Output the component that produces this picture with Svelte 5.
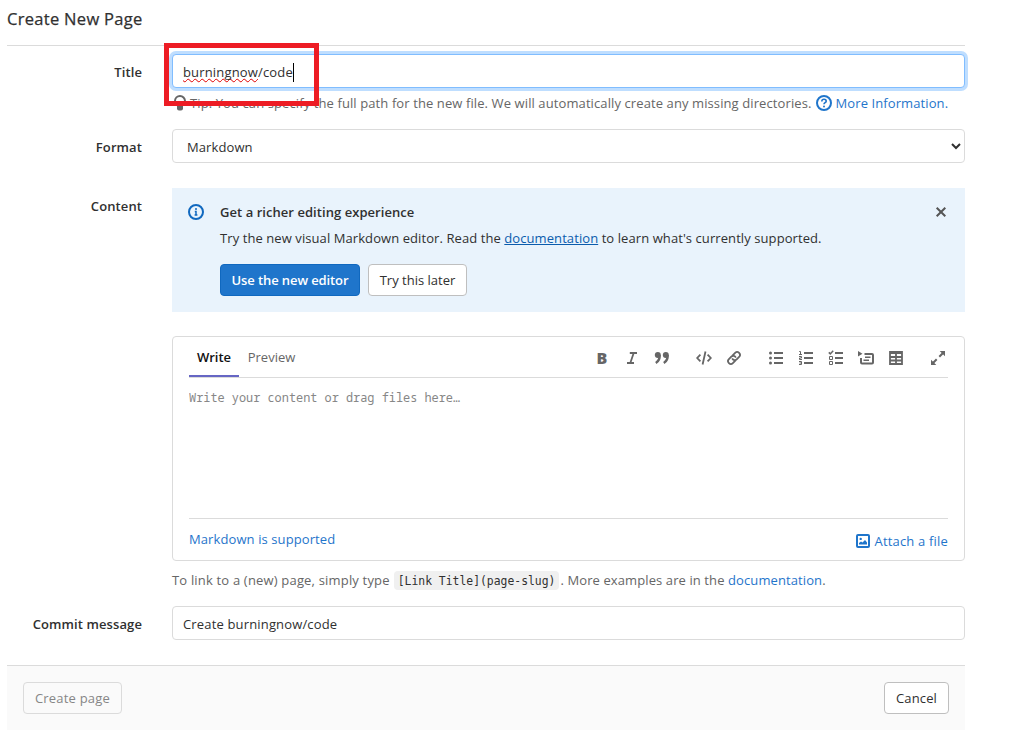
<script lang="ts">
  let title = $state('burningnow/code');
  let format = $state('Markdown');
  let tab = $state<'write' | 'preview'>('write');
  let showAlert = $state(true);

  let parts = $derived(title.split('/'));
  let commitMessage = $derived(`Create ${title}`);

  const toolbar = [
    ['bold', 'italic', 'quote'],
    ['code', 'link'],
    ['list-bulleted', 'list-numbered', 'list-task', 'collapsible', 'table'],
    ['maximize'],
  ];
</script>

{#snippet icon(name: string)}
  <svg class="icon" width="16" height="16" viewBox="0 0 16 16" fill="none" stroke="currentColor" stroke-width="2" aria-hidden="true">
    {#if name === 'bulb'}
      <path d="M5.8 10.6C4.1 9.6 3 8 3 6.1a5 5 0 0 1 10 0c0 1.9-1.1 3.5-2.8 4.5" />
      <path d="M5 10.5h6v3a2 2 0 0 1-2 2H7a2 2 0 0 1-2-2z" fill="currentColor" stroke="none" />
    {:else if name === 'question'}
      <circle cx="8" cy="8" r="7" />
      <path d="M5.8 6.4C5.8 5 6.8 4.2 8 4.2s2.2.8 2.2 2c0 1.5-2.2 1.5-2.2 3" stroke-width="1.6" />
      <circle cx="8" cy="11.4" r="1" fill="currentColor" stroke="none" />
    {:else if name === 'info'}
      <circle cx="8" cy="8" r="7" />
      <path d="M6.8 7.6H8v3.4M6.6 11h2.8" stroke-width="1.5" />
      <circle cx="8" cy="5" r="1" fill="currentColor" stroke="none" />
    {:else if name === 'close'}
      <path d="M3.7 3.7l8.6 8.6M12.3 3.7l-8.6 8.6" />
    {:else if name === 'italic'}
      <path d="M5.8 3H13M3 13h7M9.7 3L6.3 13" stroke-width="1.8" />
    {:else if name === 'quote'}
      <g fill="currentColor" stroke="none">
        <circle cx="3.8" cy="5" r="3" />
        <circle cx="11.8" cy="5" r="3" />
      </g>
      <path d="M5.6 5c.3 3.6-.6 6-3.8 8M13.6 5c.3 3.6-.6 6-3.8 8" stroke-width="2.4" />
    {:else if name === 'code'}
      <path d="M4.4 4.6L1.2 8l3.2 3.4M11.6 4.6L14.8 8l-3.2 3.4M9.5 1.5L6.6 14.5" stroke-width="1.8" />
    {:else if name === 'link'}
      <g transform="rotate(-45 8 8)">
        <path d="M7.8 10.8H3.6a2.8 2.8 0 0 1 0-5.6H7a2.8 2.8 0 0 1 2.6 3.8" stroke-width="1.8" />
        <path d="M8.2 5.2h4.2a2.8 2.8 0 0 1 0 5.6H9A2.8 2.8 0 0 1 6.4 7" stroke-width="1.8" />
      </g>
    {:else if name === 'list-bulleted'}
      <path d="M6 3h9M6 8h9M6 13h9" />
      <g fill="currentColor" stroke="none">
        <circle cx="2.5" cy="3" r="1.5" />
        <circle cx="2.5" cy="8" r="1.5" />
        <circle cx="2.5" cy="13" r="1.5" />
      </g>
    {:else if name === 'list-numbered'}
      <path d="M6 3h9M6 8h9M6 13h9" />
      <path d="M1.2 1.5h1.3v3.3M1 4.5h3" stroke-width="1" />
      <path d="M1 6.5h2.5V8h-2v1.5H4" stroke-width="1" />
      <path d="M1 11.5h2.5v3H1M1.5 13h2" stroke-width="1" />
    {:else if name === 'list-task'}
      <path d="M7 3h8M7 8h8M7 13h8" />
      <path d="M.8 2.4l1.5 1.5L5.2.8" stroke-width="1.5" />
      <path d="M1.5 6.5h3v3h-3zM1.5 11.5h3v3h-3z" stroke-width="1" />
    {:else if name === 'collapsible'}
      <path d="M0 1v5.6l4.5-2.8z" fill="currentColor" stroke="none" />
      <path d="M6.5 4H14a1 1 0 0 1 1 1v7.5a1 1 0 0 1-1 1H4a1 1 0 0 1-1-1V8" />
      <path d="M7 7.3h5.5M5.5 10.2h5.5" stroke-width="1.4" />
    {:else if name === 'table'}
      <path d="M2 2h12v12H2zM2 3h12M2 7h12M2 10.5h12M8 4v10" stroke-width="1.8" />
    {:else if name === 'maximize'}
      <path d="M9.3 6.7L13 3M6.7 9.3L3 13" />
      <path d="M9.7 1H15v5.3zM6.3 15H1V9.7z" fill="currentColor" stroke="none" />
    {:else if name === 'image'}
      <rect x="2" y="2" width="12" height="12" rx="1" />
      <path d="M4 11.5V10l2-1.5 1.5 1L10 7l2 2.5v2z" fill="currentColor" stroke="none" />
      <circle cx="5.7" cy="5.9" r="1.2" fill="currentColor" stroke="none" />
    {/if}
  </svg>
{/snippet}

<main>
  <h1>Create New Page</h1>

  <form>
    <div class="row title-row">
      <span class="label">Title</span>
      <div class="field">
        <div class="control focused" role="textbox" tabindex="0">
          <span class="misspelled">{parts[0]}</span><span>/{parts[1]}</span><span class="caret"></span>
          <div class="highlight"></div>
        </div>
        <p class="hint">
          {@render icon('bulb')}
          <span class="tip">Tip: You can specify the full path for the new file. We will automatically create any missing directories.</span>
          <a href="#help" class="more">{@render icon('question')}<span>More Information.</span></a>
        </p>
      </div>
    </div>

    <div class="row format-row">
      <label class="label" for="format">Format</label>
      <div class="field">
        <select id="format" class="control" bind:value={format}>
          <option>Markdown</option>
          <option>RDoc</option>
          <option>AsciiDoc</option>
          <option>Org</option>
        </select>
      </div>
    </div>

    <div class="row content-row">
      <span class="label">Content</span>
      <div class="field">
        {#if showAlert}
          <div class="alert">
            <span class="info">{@render icon('info')}</span>
            <div class="alert-body">
              <h2>Get a richer editing experience</h2>
              <p>Try the new visual Markdown editor. Read the <a href="#docs">documentation</a> to learn what's currently supported.</p>
              <div class="actions">
                <button type="button" class="btn primary">Use the new editor</button>
                <button type="button" class="btn later">Try this later</button>
              </div>
            </div>
            <button type="button" class="dismiss" aria-label="Dismiss" onclick={() => (showAlert = false)}>{@render icon('close')}</button>
          </div>
        {/if}

        <div class="editor">
          <div class="editor-header">
            <button type="button" class="tab write" class:active={tab === 'write'} onclick={() => (tab = 'write')}>Write</button>
            <button type="button" class="tab preview" class:active={tab === 'preview'} onclick={() => (tab = 'preview')}>Preview</button>
            <div class="toolbar">
              {#each toolbar as group}
                <div class="group">
                  {#each group as name}
                    <button type="button" class="tool" aria-label={name}>
                      {#if name === 'bold'}<b>B</b>{:else}{@render icon(name)}{/if}
                    </button>
                  {/each}
                </div>
              {/each}
            </div>
          </div>
          <textarea placeholder="Write your content or drag files here…"></textarea>
          <div class="editor-footer">
            <a href="#markdown" class="supported">Markdown is supported</a>
            <a href="#attach" class="attach">{@render icon('image')}<span>Attach a file</span></a>
          </div>
        </div>

        <p class="help">
          <span>To link to a (new) page, simply type</span>
          <code>[Link Title](page-slug)</code>
          <span>. More examples are in the <a href="#docs">documentation</a>.</span>
        </p>
      </div>
    </div>

    <div class="row commit-row">
      <label class="label" for="message">Commit message</label>
      <div class="field">
        <input id="message" class="control" type="text" value={commitMessage} />
      </div>
    </div>

    <footer>
      <button type="button" class="btn create" disabled>Create page</button>
      <button type="button" class="btn cancel">Cancel</button>
    </footer>
  </form>
</main>

<style>
  :global(body) {
    background: #fff;
  }

  main,
  button,
  input,
  select {
    font-family: 'Open Sans', 'Noto Sans', sans-serif;
    font-size: 13px;
    letter-spacing: 0.1px;
    color: #303030;
  }

  main {
    box-sizing: border-box;
    width: 965px;
    padding-left: 7px;
    line-height: 20px;
  }

  main :global(*) {
    box-sizing: border-box;
  }

  h1 {
    height: 46px;
    margin: 0;
    padding-top: 7px;
    border-bottom: 1px solid #dbdbdb;
    font-size: 16.5px;
    font-weight: 500;
    line-height: 24px;
    letter-spacing: 0.3px;
    -webkit-text-stroke: 0.25px #303030;
  }

  h2,
  p {
    margin: 0;
  }

  a {
    color: #1f75cb;
    text-decoration: none;
  }

  .icon {
    display: block;
    flex-shrink: 0;
  }

  .row {
    display: flex;
  }

  .title-row {
    padding-top: 8px;
  }

  .format-row {
    margin-top: 16px;
  }

  .content-row {
    margin-top: 25px;
  }

  .commit-row {
    margin-top: 16px;
  }

  .label {
    width: 135px;
    margin-right: 30px;
    padding-top: 8px;
    font-weight: 600;
    text-align: right;
  }

  .field {
    flex: 1;
    min-width: 0;
  }

  .control {
    display: flex;
    align-items: center;
    width: 100%;
    height: 34px;
    padding: 2px 10px 0;
    border: 1px solid #dbdbdb;
    border-radius: 4px;
    background: #fff;
    outline: none;
    color: #303030;
    letter-spacing: 0.16px;
  }

  select.control {
    display: block;
    padding: 1px 0 0 10px;
    letter-spacing: 0.1px;
  }

  .focused {
    position: relative;
    border-color: #80bdff;
    box-shadow: 0 0 0 3px #bfdeff;
  }

  .misspelled {
    text-decoration: underline wavy #e00000 1px;
    text-decoration-skip-ink: none;
    text-underline-offset: 1px;
  }

  .caret {
    width: 1px;
    height: 19px;
    background: #000;
  }

  /* Marker frame drawn over the title field */
  .highlight {
    position: absolute;
    top: -12px;
    left: -9px;
    width: 155px;
    height: 63px;
    border: 5px solid #ed1c24;
  }

  .hint {
    display: flex;
    align-items: center;
    height: 20px;
    margin-top: 5px;
    color: #666;
  }

  .tip {
    margin-left: 2px;
    white-space: nowrap;
  }

  .more {
    display: flex;
    align-items: center;
    gap: 4px;
    margin-left: 4px;
    white-space: nowrap;
  }

  .alert {
    display: flex;
    height: 124px;
    padding: 16px;
    background: #e9f3fc;
  }

  .info {
    margin-right: 16px;
    color: #1068bf;
  }

  .alert-body {
    flex: 1;
  }

  h2 {
    height: 16px;
    font-size: 13px;
    font-weight: 600;
    line-height: 16px;
    letter-spacing: 0.05px;
  }

  .alert p {
    margin-top: 8px;
    letter-spacing: 0.08px;
    white-space: nowrap;
  }

  .alert p a {
    color: #0b5cad;
    text-decoration: underline;
  }

  .actions {
    display: flex;
    gap: 8px;
    margin-top: 16px;
  }

  .btn {
    height: 32px;
    padding: 0;
    border: 1px solid #bfbfbf;
    border-radius: 4px;
    background: #fff;
    white-space: nowrap;
  }

  .primary {
    width: 140px;
    border-color: #1068bf;
    background: #1f75cb;
    color: #fff;
    font-weight: 600;
    letter-spacing: -0.1px;
  }

  .later {
    width: 99px;
    letter-spacing: 0;
  }

  .dismiss {
    display: flex;
    width: 16px;
    height: 16px;
    padding: 0;
    border: 0;
    background: none;
    color: #555;
  }

  .editor {
    height: 225px;
    margin-top: 24px;
    padding: 0 16px;
    border: 1px solid #dbdbdb;
    border-radius: 4px;
  }

  .editor-header {
    display: flex;
    height: 41px;
    border-bottom: 1px solid #dbdbdb;
  }

  .tab {
    height: 40px;
    padding: 2px 0 0;
    border: 0;
    border-bottom: 2px solid transparent;
    background: none;
    color: #666;
    letter-spacing: 0;
  }

  .write {
    width: 50px;
  }

  .preview {
    width: 65px;
  }

  .tab.active {
    border-bottom-color: #6666c4;
    color: #111;
    font-weight: 600;
  }

  .toolbar {
    display: flex;
    align-items: center;
    gap: 26px;
    margin: 2px 2px 0 auto;
  }

  .group {
    display: flex;
    gap: 14px;
  }

  .tool {
    display: flex;
    align-items: center;
    justify-content: center;
    width: 16px;
    height: 16px;
    padding: 0;
    border: 0;
    background: none;
    color: #666;
  }

  b {
    font-size: 16px;
    font-weight: 800;
    line-height: 16px;
  }

  textarea {
    display: block;
    width: 100%;
    height: 140px;
    padding: 9px 0 0;
    border: 0;
    outline: none;
    resize: none;
    font-family: 'Noto Sans Mono', 'DejaVu Sans Mono', monospace;
    font-size: 11.9px;
    line-height: 20px;
  }

  textarea::placeholder {
    color: #868686;
  }

  .editor-footer {
    display: flex;
    justify-content: space-between;
    height: 42px;
    padding-top: 10px;
    border-top: 1px solid #dbdbdb;
  }

  .attach {
    display: flex;
    align-items: center;
    gap: 4px;
    height: 20px;
    margin-top: 2px;
    letter-spacing: 0.18px;
  }

  .help {
    display: flex;
    align-items: center;
    height: 20px;
    margin-top: 9px;
    color: #666;
    white-space: pre;
  }

  .help span:first-child {
    letter-spacing: 0.18px;
  }

  code {
    height: 19px;
    margin: 0 1px 0 4px;
    padding: 0 4px;
    border-radius: 4px;
    background: #f0f0f0;
    color: #303030;
    font-family: 'DejaVu Sans Mono', monospace;
    font-size: 11.4px;
    line-height: 20px;
    letter-spacing: 0;
  }

  footer {
    display: flex;
    justify-content: space-between;
    height: 65px;
    margin-top: 25px;
    padding: 16px;
    border-top: 1px solid #dbdbdb;
    background: #fafafa;
  }

  .create {
    width: 99px;
    border-color: #dbdbdb;
    background: #fafafa;
    color: #868686;
    letter-spacing: 0.2px;
  }

  .cancel {
    width: 65px;
    letter-spacing: 0.15px;
  }
</style>
